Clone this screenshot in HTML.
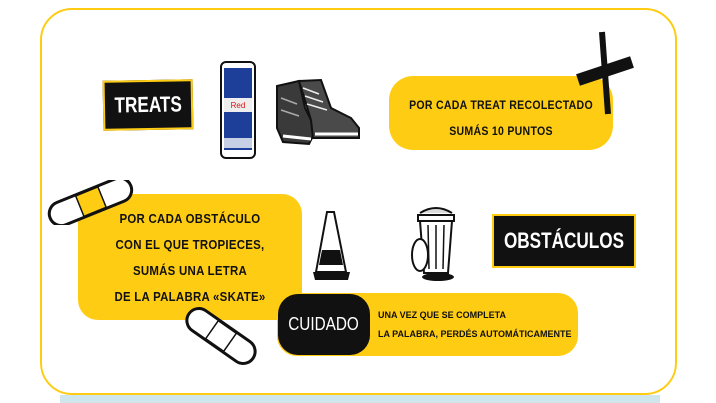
<!DOCTYPE html>
<html><head><meta charset="utf-8"><style>
body{margin:0;width:716px;height:403px;background:#fff;position:relative;overflow:hidden;font-family:"Liberation Sans",sans-serif}
.a{position:absolute}
.card{left:40px;top:8px;width:633px;height:383px;border:2px solid #ffcc14;border-radius:32px;background:#fff}
.y{background:#ffcc14}
.hand{font-family:"Liberation Sans Narrow","Liberation Sans",sans-serif;font-size:12px;font-weight:bold;color:#111;text-align:center;letter-spacing:.3px;transform:scaleX(.88)}
.lbl{background:#111;color:#fff;font-weight:bold;display:flex;align-items:center;justify-content:center;border:2px solid #ffcc14;overflow:hidden}
.lbl span{display:inline-block;transform:scaleX(.78);white-space:nowrap}
</style></head><body>
<div class="a" style="left:60px;top:395px;width:600px;height:8px;background:#cfe6ec"></div>
<div class="a card"></div>
<div class="a lbl" style="left:103px;top:80px;width:86px;height:46px;font-size:22px;transform:rotate(-1deg)"><span>TREATS</span></div>
<svg class="a" style="left:218px;top:60px" width="40" height="100" viewBox="0 0 40 100"><rect x="3" y="2" width="34" height="96" rx="5" fill="#fff" stroke="#111" stroke-width="2"/><rect x="6" y="8" width="28" height="82" fill="#1d3f9a"/><rect x="6" y="38" width="28" height="14" fill="#eee"/><text x="20" y="48" font-size="8" fill="#d11" text-anchor="middle" font-family="Liberation Sans">Red</text><rect x="6" y="78" width="28" height="10" fill="#c8d0e6"/></svg>
<svg class="a" style="left:273px;top:78px" width="90" height="70" viewBox="0 0 90 70"><path d="M4 8 L26 3 L32 30 L38 42 L40 58 L36 66 L10 64 L4 50 Z" fill="#3a3a3a" stroke="#111" stroke-width="2"/><path d="M26 3 L48 2 L58 30 L78 40 L86 50 L86 60 L40 60 L38 42 Z" fill="#4a4a4a" stroke="#111" stroke-width="2"/><path d="M10 58 L38 61 M42 56 L85 56" stroke="#fff" stroke-width="3"/><path d="M30 10 L46 16 M32 18 L50 24 M34 26 L54 32" stroke="#eee" stroke-width="1.5"/><path d="M8 20 L24 26 M8 32 L26 38" stroke="#aaa" stroke-width="1.5"/></svg>
<div class="a y" style="left:389px;top:76px;width:224px;height:74px;border-radius:24px"></div>
<div class="a hand" style="left:389px;top:92px;width:224px;line-height:26px">POR CADA TREAT RECOLECTADO<br>SUMÁS 10 PUNTOS</div>
<svg class="a" style="left:570px;top:28px" width="75" height="94" viewBox="0 0 75 94"><path d="M32 4 L38 86" stroke="#111" stroke-width="6"/><path d="M8 52 L62 34" stroke="#111" stroke-width="12"/></svg>
<div class="a y" style="left:78px;top:194px;width:224px;height:126px;border-radius:20px"></div>
<div class="a hand" style="left:78px;top:206px;width:224px;line-height:26px;font-size:13px">POR CADA OBSTÁCULO<br>CON EL QUE TROPIECES,<br>SUMÁS UNA LETRA<br>DE LA PALABRA «SKATE»</div>
<svg class="a" style="left:43px;top:180px" width="95" height="45" viewBox="0 0 95 45"><g transform="rotate(-22 47 22)"><rect x="4" y="10" width="87" height="24" rx="12" fill="#fff" stroke="#111" stroke-width="3"/><rect x="36" y="11" width="24" height="22" fill="#ffcc14" stroke="#111" stroke-width="1.5"/></g></svg>
<svg class="a" style="left:180px;top:305px" width="82" height="62" viewBox="0 0 82 62"><g transform="rotate(35 41 31)"><rect x="2" y="19" width="78" height="24" rx="12" fill="#fff" stroke="#111" stroke-width="3"/><rect x="30" y="20" width="22" height="22" fill="#fff" stroke="#111" stroke-width="1.5"/></g></svg>
<svg class="a" style="left:312px;top:210px" width="40" height="72" viewBox="0 0 40 72"><path d="M15 2 L22 2 L34 62 L4 62 Z" fill="#fff" stroke="#111" stroke-width="2"/><path d="M10 40 L28 40 L31 55 L7 55 Z" fill="#111"/><path d="M1 62 L38 62 L36 70 L3 70 Z" fill="#111"/></svg>
<svg class="a" style="left:408px;top:203px" width="55" height="80" viewBox="0 0 55 80"><path d="M12 10 Q28 0 44 10" stroke="#111" stroke-width="2" fill="#ddd"/><rect x="10" y="12" width="36" height="6" fill="#fff" stroke="#111" stroke-width="2"/><path d="M12 18 L44 18 L40 70 L16 70 Z" fill="#fff" stroke="#111" stroke-width="2"/><path d="M20 22 L21 66 M28 22 L28 66 M36 22 L35 66" stroke="#111" stroke-width="1.5"/><ellipse cx="12" cy="52" rx="8" ry="16" fill="#fff" stroke="#111" stroke-width="2"/><ellipse cx="30" cy="74" rx="16" ry="4" fill="#111"/></svg>
<div class="a lbl" style="left:492px;top:214px;width:140px;height:50px;font-size:22px"><span>OBSTÁCULOS</span></div>
<div class="a y" style="left:277px;top:293px;width:301px;height:63px;border-radius:20px"></div>
<div class="a" style="left:278px;top:294px;width:92px;height:61px;border-radius:20px;background:#111;color:#fff;font-size:18px;display:flex;align-items:center;justify-content:center"><span style="display:inline-block;transform:scaleX(.85)">CUIDADO</span></div>
<div class="a hand" style="left:378px;top:306px;text-align:left;font-size:9px;line-height:19px;letter-spacing:0;transform:none">UNA VEZ QUE SE COMPLETA<br>LA PALABRA, PERDÉS AUTOMÁTICAMENTE</div>
</body></html>
